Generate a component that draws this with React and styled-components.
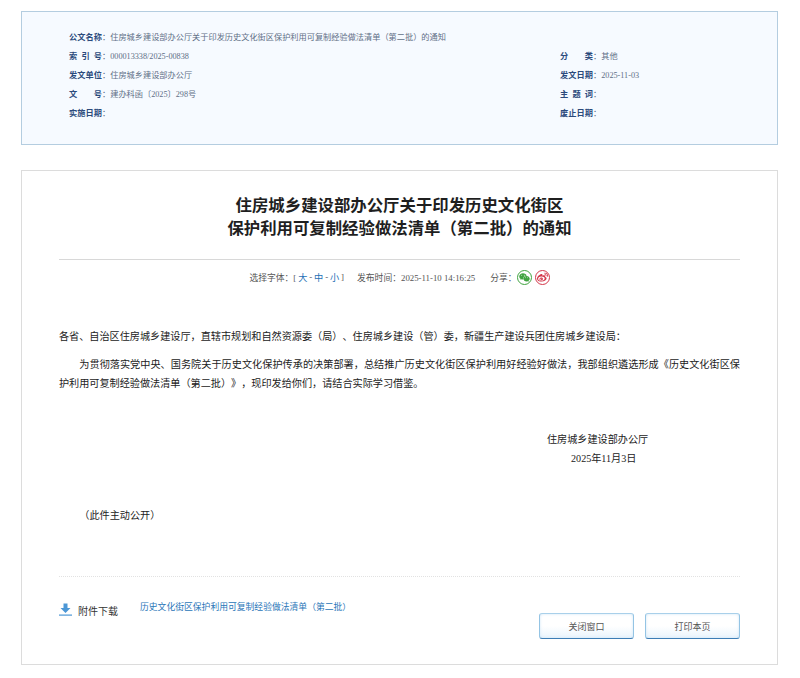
import React from 'react'
import styled, { createGlobalStyle } from 'styled-components'
import { FaWeixin, FaWeibo } from 'react-icons/fa'

const GlobalStyle = createGlobalStyle`
  html, body { margin: 0; padding: 0; background: #fff; }
  body {
    font-family: "Noto Sans CJK SC", "Liberation Sans", sans-serif;
    text-spacing-trim: space-all;
  }
`

const Page = styled.div`
  width: 800px;
  height: 678px;
  overflow: hidden;
  padding: 11px 22px 0 21px;
  box-sizing: border-box;
`

const InfoPanel = styled.section`
  height: 134px;
  box-sizing: border-box;
  border: 1px solid #b4cde0;
  background: #f6faff;
  padding: 14px 0 0 47px;
  display: grid;
  grid-template-columns: 491px 1fr;
  grid-auto-rows: 19px;
  font-size: 8.2px;
`

const InfoItem = styled.div`
  grid-column: ${p => (p.$wide ? '1 / span 2' : 'auto')};
  display: flex;
  align-items: center;
`

const InfoLabel = styled.span`
  width: 33px;
  flex: none;
  display: flex;
  justify-content: space-between;
  color: #2b4a7c;
  font-weight: 700;
`

const InfoValue = styled.span`
  color: #5f6f86;
  font-family: "Liberation Serif", "Noto Sans CJK SC", serif;
`

const Article = styled.article`
  margin-top: 25px;
  height: 495px;
  box-sizing: border-box;
  border: 1px solid #dcdcdc;
  padding: 22px 37px 0;
  display: flex;
  flex-direction: column;
`

const Title = styled.h1`
  margin: 0;
  height: 66px;
  text-align: center;
  font-size: 16.4px;
  line-height: 22.5px;
  font-weight: 700;
  color: #1f1f1f;
`

const MetaBar = styled.div`
  border-top: 1px solid #d8d8d8;
  height: 34px;
  display: flex;
  justify-content: center;
  align-items: center;
  font-size: 8.8px;
  color: #555;
  font-family: "Liberation Serif", "Noto Sans CJK SC", serif;
`

const MetaPart = styled.span`
  margin-right: ${p => p.$gap || 0}px;
  display: inline-flex;
  align-items: center;
`

const SizeLink = styled.a`
  color: #1f6fb5;
  font-size: 9.2px;
  margin: 0 1.900px;
`

const ShareIcon = styled.span`
  width: 15px;
  height: 15px;
  box-sizing: border-box;
  border-radius: 50%;
  border: 1px solid ${p => p.$color};
  color: ${p => p.$color};
  display: inline-flex;
  align-items: center;
  justify-content: center;
  margin-left: ${p => p.$gap || 0}px;
  font-size: 11px;
`

const Body = styled.div`
  margin-top: 33px;
  font-family: "Liberation Serif", "Noto Sans CJK SC", serif;
  font-size: 10.15px;
  line-height: 19px;
  color: #222;
`

const Para = styled.p`
  margin: 0 0 9px;
  text-indent: ${p => (p.$indent ? '2em' : 0)};
  text-align: justify;
`

const Signature = styled.div`
  margin-top: 37px;
  margin-left: 488px;
  white-space: nowrap;
`

const SignDate = styled.div`
  padding-left: 24px;
`

const PublicNote = styled.p`
  margin: 38px 0 0;
  text-indent: 2em;
`

const Footer = styled.div`
  margin-top: 51px;
  border-top: 1px dotted #e2e2e2;
  display: flex;
  justify-content: space-between;
  align-items: flex-start;
`

const Attachment = styled.div`
  display: flex;
  align-items: center;
  margin-top: 25px;
`

const AttachLabel = styled.span`
  font-size: 10px;
  color: #333;
  margin-left: 6px;
  margin-right: 22px;
  position: relative;
  top: 1px;
`

const AttachLink = styled.a`
  font-size: 8.8px;
  color: #2a76b8;
  position: relative;
  top: -3px;
`

const Buttons = styled.div`
  display: flex;
  gap: 11px;
  margin-top: 36px;
`

const Button = styled.button`
  width: 95px;
  height: 26px;
  box-sizing: border-box;
  padding: 0;
  border: 1px solid #94c4e4;
  border-top-color: #a9d0ea;
  border-bottom-color: #3d7db5;
  border-radius: 3px;
  background: linear-gradient(#fff 50%, #eaf4fc);
  box-shadow: inset 0 0 3px #cfe5f6;
  font-family: inherit;
  font-size: 9px;
  color: #555;
`

const DownloadIcon = () => (
  <svg width="13" height="13" viewBox="0 0 13 13" aria-hidden="true">
    <path d="M4.5 0.5h4v4.5h3L6.5 10 1.500 5h3z" fill="#4c97d6" />
    <rect x="0" y="11.500" width="13" height="1.200" fill="#4c97d6" />
  </svg>
)

const leftRows = [
  ['索引号', '000013338/2025-00838'],
  ['发文单位', '住房城乡建设部办公厅'],
  ['文号', '建办科函〔2025〕298号'],
  ['实施日期', ''],
]
const rightRows = [
  ['分类', '其他'],
  ['发文日期', '2025-11-03'],
  ['主题词', ''],
  ['废止日期', ''],
]

const Label = ({ text }) => (
  <InfoLabel>
    {text.split('').map((c, i) => <span key={i}>{c}</span>)}
  </InfoLabel>
)

const Info = ({ label, value, wide }) => (
  <InfoItem $wide={wide}>
    <Label text={label} />
    <InfoValue>：{value}</InfoValue>
  </InfoItem>
)

export default function App() {
  return (
    <Page>
      <GlobalStyle />
      <InfoPanel>
        <Info wide label="公文名称" value="住房城乡建设部办公厅关于印发历史文化街区保护利用可复制经验做法清单（第二批）的通知" />
        {leftRows.map((row, i) => (
          <React.Fragment key={row[0]}>
            <Info label={row[0]} value={row[1]} />
            <Info label={rightRows[i][0]} value={rightRows[i][1]} />
          </React.Fragment>
        ))}
      </InfoPanel>
      <Article>
        <Title>
          住房城乡建设部办公厅关于印发历史文化街区<br />
          保护利用可复制经验做法清单（第二批）的通知
        </Title>
        <MetaBar>
          <MetaPart $gap={13}>
            选择字体：[<SizeLink>大</SizeLink>-<SizeLink>中</SizeLink>-<SizeLink>小</SizeLink>]
          </MetaPart>
          <MetaPart $gap={15}>发布时间：2025-11-10 14:16:25</MetaPart>
          <MetaPart>分享：</MetaPart>
          <ShareIcon $color="#3fa33f"><FaWeixin /></ShareIcon>
          <ShareIcon $color="#d3374a" $gap={3}><FaWeibo /></ShareIcon>
        </MetaBar>
        <Body>
          <Para>各省、自治区住房城乡建设厅，直辖市规划和自然资源委（局）、住房城乡建设（管）委，新疆生产建设兵团住房城乡建设局：</Para>
          <Para $indent>为贯彻落实党中央、国务院关于历史文化保护传承的决策部署，总结推广历史文化街区保护利用好经验好做法，我部组织遴选形成《历史文化街区保护利用可复制经验做法清单（第二批）》，现印发给你们，请结合实际学习借鉴。</Para>
          <Signature>
            住房城乡建设部办公厅
            <SignDate>2025年11月3日</SignDate>
          </Signature>
          <PublicNote>（此件主动公开）</PublicNote>
        </Body>
        <Footer>
          <Attachment>
            <DownloadIcon />
            <AttachLabel>附件下载</AttachLabel>
            <AttachLink>历史文化街区保护利用可复制经验做法清单（第二批）</AttachLink>
          </Attachment>
          <Buttons>
            <Button>关闭窗口</Button>
            <Button>打印本页</Button>
          </Buttons>
        </Footer>
      </Article>
    </Page>
  )
}
